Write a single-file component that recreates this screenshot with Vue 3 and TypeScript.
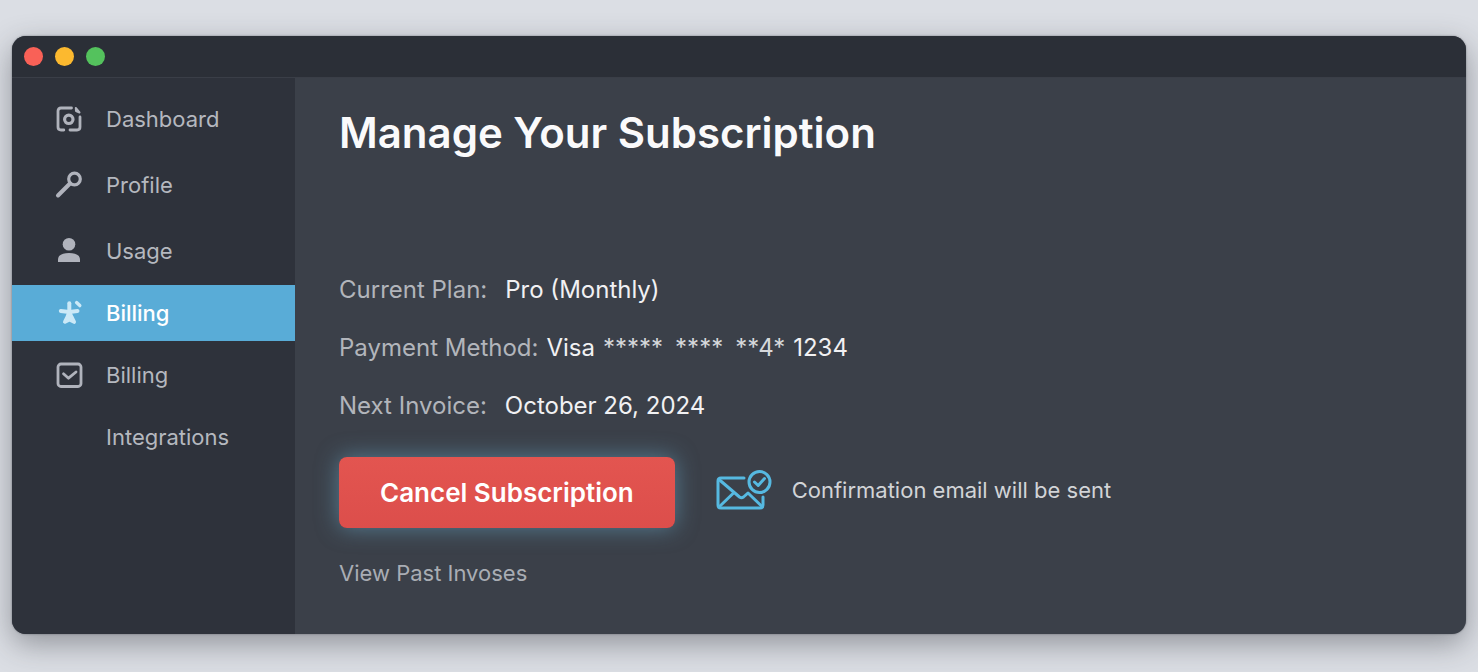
<script setup lang="ts">
interface NavItem {
  id: number
  label: string
  icon: 'dashboard' | 'key' | 'user' | 'star' | 'check' | null
  active?: boolean
}

const navGroups: NavItem[][] = [
  [
    { id: 1, label: 'Dashboard', icon: 'dashboard' },
    { id: 2, label: 'Profile', icon: 'key' },
    { id: 3, label: 'Usage', icon: 'user' },
  ],
  [
    { id: 4, label: 'Billing', icon: 'star', active: true },
    { id: 5, label: 'Billing', icon: 'check' },
    { id: 6, label: 'Integrations', icon: null },
  ],
]
</script>

<template>
  <div class="desktop">
    <div class="window">
      <header class="titlebar">
        <button class="dot red" type="button" aria-label="Close"></button>
        <button class="dot yellow" type="button" aria-label="Minimize"></button>
        <button class="dot green" type="button" aria-label="Zoom"></button>
      </header>
      <div class="body">
        <nav class="sidebar">
          <div v-for="(group, index) in navGroups" :key="index" class="group">
            <a
              v-for="item in group"
              :key="item.id"
              href="#"
              class="item"
              :class="{ active: item.active }"
            >
              <svg class="icon" viewBox="0 0 28 28" aria-hidden="true">
                <g v-if="item.icon === 'dashboard'" class="line">
                  <path d="M16.5 3H6Q3 3 3 6V22Q3 25 6 25H8.8" />
                  <path d="M15 25H22Q25 25 25 22V12" />
                  <path d="M20.800 3L24.500 7.500L21 6Z" class="fold" />
                  <circle cx="13.800" cy="14.300" r="4.200" class="ring" />
                </g>
                <g v-else-if="item.icon === 'key'" class="line">
                  <circle cx="19.500" cy="8" r="5.800" class="ring" />
                  <path d="M15 12.500L3 24.500" class="handle" />
                </g>
                <g v-else-if="item.icon === 'user'" class="solid">
                  <circle cx="14" cy="7.200" r="6.300" />
                  <path d="M3 25V22.500C3 18 7.500 16 14 16S25 18 25 22.500V25Z" />
                </g>
                <g v-else-if="item.icon === 'star'" class="star">
                  <path d="M14.300 4.200V14" />
                  <path d="M5.800 12L14.300 13L22.500 12" />
                  <path d="M14.300 13L12.500 18L10 22.800L14.500 20.500L19 22.800L16.500 18Z" />
                  <path d="M21.600 3.600L24.800 6.600" class="ray" />
                </g>
                <g v-else-if="item.icon === 'check'" class="line">
                  <rect x="3" y="3" width="23" height="22.500" rx="3" />
                  <path d="M8.500 12.800L13.500 17.200L21 11" />
                </g>
              </svg>
              <span>{{ item.label }}</span>
            </a>
          </div>
        </nav>
        <main class="content">
          <h1>Manage Your Subscription</h1>
          <dl class="details">
            <div class="row">
              <dt>Current Plan:</dt>
              <dd>Pro (Monthly)</dd>
            </div>
            <div class="row tight">
              <dt>Payment Method:</dt>
              <dd class="card">
                <span>Visa</span>
                <span class="mask"><span>*****</span><span>****</span><span>**4*</span></span>
                <span>1234</span>
              </dd>
            </div>
            <div class="row">
              <dt>Next Invoice:</dt>
              <dd>October 26, 2024</dd>
            </div>
          </dl>
          <div class="actions">
            <button class="cancel" type="button">Cancel Subscription</button>
            <p class="notice">
              <svg class="mail" viewBox="0 0 58 42" aria-hidden="true">
                <path d="M28 9H5Q2 9 2 12V36Q2 39 5 39H44Q47 39 47 36V28" />
                <path d="M3 10.500L23.500 28Q25.500 29.500 27.500 28L32 24L46 37.500" />
                <path d="M3.500 37.500L17 24.500" />
                <circle cx="43.500" cy="13" r="10.500" />
                <path d="M38.500 13L42.200 16.500L48.500 9.500" />
              </svg>
              <span>Confirmation email will be sent</span>
            </p>
          </div>
          <a href="#" class="past">View Past Invoses</a>
        </main>
      </div>
    </div>
  </div>
</template>

<style>
body {
  margin: 0;
}
</style>

<style scoped>
.desktop {
  box-sizing: border-box;
  min-height: 100vh;
  padding: 36px 12px 38px;
  display: flex;
  background: #dbdee4;
  font-family: Inter, 'Liberation Sans', sans-serif;
  overflow: hidden;
}

.window {
  flex: 1;
  min-width: 0;
  display: flex;
  flex-direction: column;
  border-radius: 14px;
  overflow: hidden;
  background: #3b4049;
  box-shadow: 0 10px 30px rgba(45, 48, 55, 0.42), 0 0 2px rgba(35, 40, 50, 0.5);
}

.titlebar {
  display: flex;
  align-items: center;
  gap: 12px;
  height: 41px;
  padding: 0 12px;
  background: #2b2f37;
  border-bottom: 1px solid #3a3e47;
}

.dot {
  width: 19px;
  height: 19px;
  padding: 0;
  border: 0;
  border-radius: 50%;
}

.red {
  background: #f96157;
}

.yellow {
  background: #fcb92f;
}

.green {
  background: #54c25d;
}

.body {
  flex: 1;
  display: flex;
}

.sidebar {
  flex: none;
  width: 283px;
  padding-top: 13px;
  display: flex;
  flex-direction: column;
  gap: 6px;
  background: #2e323b;
}

.group {
  display: flex;
  flex-direction: column;
  gap: 10px;
}

.group + .group {
  gap: 6px;
}

.item {
  display: flex;
  align-items: center;
  gap: 23px;
  height: 56px;
  padding-left: 43px;
  color: #b5b8bf;
  font-size: 22px;
  text-decoration: none;
}

.item.active {
  background: #59acd7;
  color: #fff;
  font-weight: 500;
}

.icon {
  width: 28px;
  height: 28px;
  color: #b0b3bc;
}

.active .icon {
  color: #cbe9f7;
}

.line {
  fill: none;
  stroke: currentColor;
  stroke-width: 2.8;
  stroke-linecap: round;
  stroke-linejoin: round;
}

.ring {
  stroke-width: 3.2;
}

.fold {
  fill: currentColor;
  stroke-width: 2;
}

.handle {
  stroke-width: 4;
}

.solid {
  fill: currentColor;
}

.star {
  fill: currentColor;
  stroke: currentColor;
  stroke-width: 4;
  stroke-linecap: round;
  stroke-linejoin: round;
}

.ray {
  stroke-width: 3.4;
}

.content {
  flex: 1;
  min-width: 0;
  padding: 27px 44px;
}

h1 {
  margin: 0;
  color: #fafafb;
  font-size: 42px;
  line-height: 56px;
  font-weight: 600;
}

.details {
  display: flex;
  flex-direction: column;
  gap: 26px;
  margin: 113px 0 35px;
  font-size: 24px;
  line-height: 32px;
}

.row {
  display: flex;
  gap: 18px;
}

.row.tight {
  gap: 8px;
}

dt {
  color: #b2b5bb;
}

dd {
  margin: 0;
  color: #f1f1f3;
}

.card {
  display: flex;
  gap: 8px;
}

.mask {
  display: flex;
  gap: 12px;
  color: #d6d8db;
}

.actions {
  display: flex;
  align-items: center;
  gap: 41px;
}

.cancel {
  padding: 18px 41px;
  border: 0;
  border-radius: 8px;
  background: linear-gradient(#e35550, #dc4e4b);
  box-shadow: 0 0 22px rgba(110, 175, 208, 0.55);
  color: #fff;
  font-family: inherit;
  font-size: 26px;
  line-height: 35px;
  font-weight: 600;
}

.notice {
  display: flex;
  align-items: center;
  gap: 18px;
  margin: 0;
  padding-bottom: 6px;
  color: #d2d4d7;
  font-size: 22px;
}

.mail {
  width: 58px;
  height: 42px;
  fill: none;
  stroke: #56b9e1;
  stroke-width: 3;
  stroke-linecap: round;
  stroke-linejoin: round;
}

.past {
  display: inline-block;
  margin-top: 30px;
  color: #a9adb4;
  font-size: 22px;
  line-height: 30px;
  text-decoration: none;
}
</style>
